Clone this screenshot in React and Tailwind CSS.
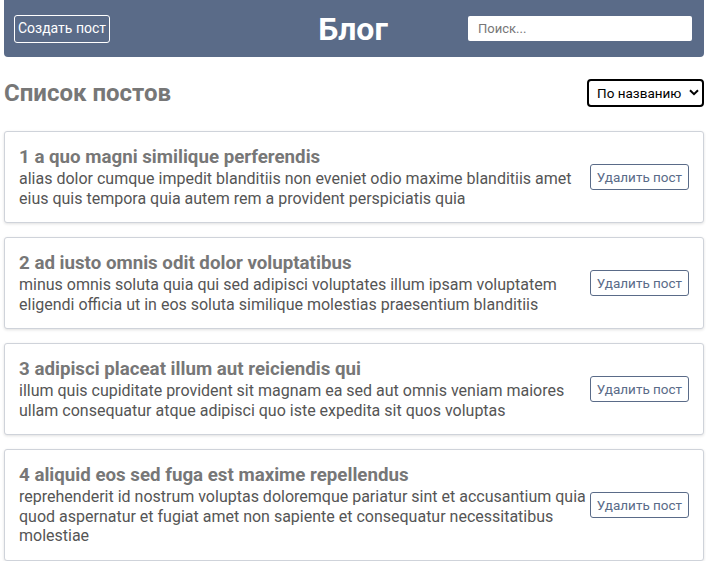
import React, { useState } from 'react';

const posts = [
  { id: 1, title: 'a quo magni similique perferendis', body: 'alias dolor cumque impedit blanditiis non eveniet odio maxime blanditiis amet eius quis tempora quia autem rem a provident perspiciatis quia' },
  { id: 2, title: 'ad iusto omnis odit dolor voluptatibus', body: 'minus omnis soluta quia qui sed adipisci voluptates illum ipsam voluptatem eligendi officia ut in eos soluta similique molestias praesentium blanditiis' },
  { id: 3, title: 'adipisci placeat illum aut reiciendis qui', body: 'illum quis cupiditate provident sit magnam ea sed aut omnis veniam maiores ullam consequatur atque adipisci quo iste expedita sit quos voluptas' },
  { id: 4, title: 'aliquid eos sed fuga est maxime repellendus', body: 'reprehenderit id nostrum voluptas doloremque pariatur sint et accusantium quia quod aspernatur et fugiat amet non sapiente et consequatur necessitatibus molestiae' },
];

const PostItem = ({ post }) => (
  <div className="flex items-center gap-[4px] border border-[#cfd3da] rounded-[3px] shadow-[0_1px_3px_rgba(0,0,0,0.12)] pl-[14px] pr-[14px] py-[14px] bg-white">
    <div className="flex-1 min-w-0">
      <div className="text-[18.72px] leading-[23px] font-bold text-[#777]">{post.id} {post.title}</div>
      <div className="text-[16px] leading-[19.5px] text-[#555]">{post.body}</div>
    </div>
    <button className="shrink-0 w-[99px] h-[26px] border border-[#5a6b88] rounded-[3px] text-[13.5px] text-[#5a6b88] bg-white">
      Удалить пост
    </button>
  </div>
);

export default function App() {
  const [sort, setSort] = useState('title');

  return (
    <div className="pl-[4px] pr-[2px] font-['Roboto',sans-serif]">
      <header className="grid grid-cols-3 items-center h-[57px] pl-[10px] pr-[12px] bg-[#5a6b88] rounded-b-[4px]">
        <div className="justify-self-start">
          <button className="h-[28px] w-[96px] border border-white rounded-[3px] text-white text-[14px]">
            Создать пост
          </button>
        </div>
        <h1 className="justify-self-center text-white text-[32px] font-bold leading-none">Блог</h1>
        <div className="justify-self-end">
          <input
            className="w-[224px] h-[25px] bg-white rounded-[2px] px-[10px] text-[13px] outline-none placeholder:text-[#777]"
            placeholder="Поиск..."
          />
        </div>
      </header>

      <div className="flex items-center justify-between mt-[22px] mb-[24px]">
        <h2 className="text-[24px] font-bold text-[#777] leading-[28px]">Список постов</h2>
        <div className="relative">
          <select
            value={sort}
            onChange={e => setSort(e.target.value)}
            className="appearance-none block h-[28px] w-[117px] border-2 border-black rounded-[4px] text-[13.5px] text-black bg-white pl-[8px] pr-[14px]"
          >
            <option value="title">По названию</option>
            <option value="body">По описанию</option>
          </select>
          <svg className="absolute right-[5px] top-[10px] pointer-events-none" width="10" height="7" viewBox="0 0 10 7">
            <path d="M1 1.2 L5 5.2 L9 1.2" fill="none" stroke="black" strokeWidth="2" />
          </svg>
        </div>
      </div>

      <div className="flex flex-col gap-[14px]">
        {posts.map(p => <PostItem key={p.id} post={p} />)}
      </div>
    </div>
  );
}
